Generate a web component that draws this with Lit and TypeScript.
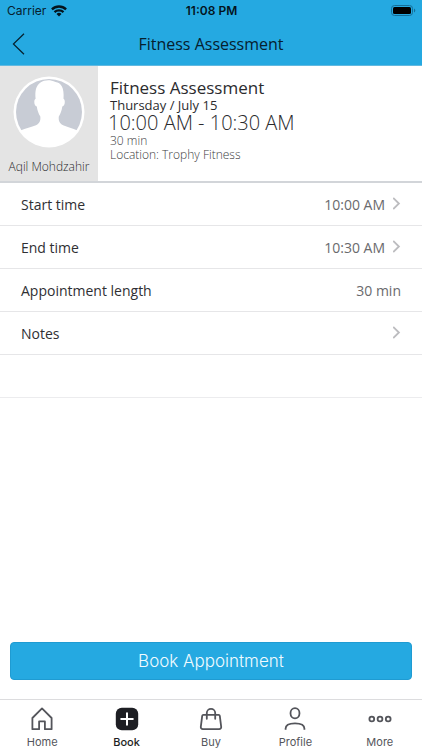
import { LitElement, html, css, svg, nothing } from "lit";
import { customElement, property } from "lit/decorators.js";
import { classMap } from "lit/directives/class-map.js";

const chevron = html`<svg class="chevron" width="8" height="16" viewBox="0 0 8 16" aria-hidden="true">
  <path d="M.2 1 5.9 6.500.2 12" fill="none" stroke="#bcbcbf" stroke-width="1.8" />
</svg>`;

interface Row {
  label: string;
  value?: string;
  link?: boolean;
}

const rows: Row[] = [
  { label: "Start time", value: "10:00 AM", link: true },
  { label: "End time", value: "10:30 AM", link: true },
  { label: "Appointment length", value: "30 min" },
  { label: "Notes", link: true },
];

const tabs = [
  {
    label: "Home",
    icon: svg`<path d="M2.4 11 12 1.4l9.600 9.600v11.200h-6.700v-7.800H9.100v7.800H2.400z" stroke-linejoin="round" />`,
  },
  {
    label: "Book",
    active: true,
    icon: svg`<rect x="0.8" y="0.8" width="22.4" height="22.4" rx="6" fill="#1d1e23" stroke="none" />
      <path d="M12 6.200v11.600M6.200 12h11.600" stroke="#fff" stroke-width="2" stroke-linecap="round" />`,
  },
  {
    label: "Buy",
    icon: svg`<path d="M4.400 7.800h15.200a1.200 1.200 0 0 1 1.200 1l1.400 11a2 2 0 0 1-2 2.300H3.800a2 2 0 0 1-2-2.300l1.400-11a1.200 1.200 0 0 1 1.200-1z" />
      <path d="M7.800 11.800V6a4.200 4.200 0 0 1 8.400 0v5.800" stroke-linecap="round" />`,
  },
  {
    label: "Profile",
    icon: svg`<ellipse cx="12" cy="6.300" rx="4.500" ry="5.100" />
      <path d="M2.600 22.800v-1.200c0-3.400 3-5.200 9.400-5.200s9.400 1.800 9.400 5.200v1.200" />`,
  },
  {
    label: "More",
    icon: svg`<circle cx="3.800" cy="12" r="2.400" /><circle cx="12" cy="12" r="2.400" /><circle cx="20.200" cy="12" r="2.400" />`,
  },
];

@customElement("status-bar")
class StatusBar extends LitElement {
  static styles = css`
    :host {
      display: grid;
      grid-template-columns: 1fr auto 1fr;
      align-items: center;
      height: 22px;
      padding: 0 6px 0 7px;
      font: 12px/16px Inter, "Liberation Sans", sans-serif;
      color: #06202e;
    }
    .carrier {
      display: flex;
      align-items: center;
      gap: 5px;
    }
    .time {
      font-weight: 600;
      color: #04141d;
    }
    .battery {
      justify-self: end;
    }
  `;
  render() {
    return html`
      <span class="carrier">
        Carrier
        <svg width="16" height="12" viewBox="0 0 16 12" aria-label="Wi-Fi">
          <g fill="none" stroke="#04141d" stroke-width="2.3">
            <path d="M.9 4.400a10.200 10.200 0 0 1 14.200 0" />
            <path d="M3.500 7.200a6.500 6.500 0 0 1 9 0" />
          </g>
          <path d="M8 11.600 5.500 9a3.600 3.600 0 0 1 5 0z" fill="#04141d" />
        </svg>
      </span>
      <span class="time">11:08 PM</span>
      <svg class="battery" width="25" height="12" viewBox="0 0 25 12" aria-label="Battery full">
        <rect x=".5" y=".5" width="21" height="10" rx="3" fill="none" stroke="#156f99" />
        <rect x="2" y="2" width="18" height="7" rx="1.500" fill="#000" />
        <path d="M23 3.500v4a2.200 2.200 0 0 0 0-4z" fill="#156f99" />
      </svg>
    `;
  }
}

@customElement("detail-row")
class DetailRow extends LitElement {
  @property() label = "";
  @property() value = "";
  @property({ type: Boolean }) link = false;
  static styles = css`
    :host {
      display: block;
      border-bottom: 1px solid #e6e6e8;
    }
    .row {
      display: flex;
      align-items: center;
      gap: 8px;
      box-sizing: border-box;
      width: 100%;
      height: 42px;
      padding: 2px 21px 0;
      border: 0;
      background: none;
      font: 14px/20px "Open Sans", "Noto Sans", sans-serif;
      color: #2f2f33;
      text-align: left;
    }
    .label {
      flex: 1;
    }
    .value {
      color: #6a6a6d;
    }
  `;
  render() {
    const body = html`<span class="label">${this.label}</span>
      ${this.value ? html`<span class="value">${this.value}</span>` : nothing}
      ${this.link ? chevron : nothing}`;
    return this.link
      ? html`<button class="row" type="button">${body}</button>`
      : html`<div class="row">${body}</div>`;
  }
}

@customElement("tab-bar")
class TabBar extends LitElement {
  static styles = css`
    .tabs {
      display: grid;
      grid-template-columns: repeat(5, 1fr);
      border-top: 1px solid #dcdcde;
      background: #fff;
    }
    .tab {
      display: flex;
      flex-direction: column;
      align-items: center;
      gap: 3px;
      padding: 7px 0 0;
      font: 11px/16px Inter, "Liberation Sans", sans-serif;
      color: #54555b;
      text-decoration: none;
    }
    .active {
      font-weight: 500;
      color: #1d1e23;
    }
  `;
  render() {
    return html`<nav class="tabs">
      ${tabs.map(
        (t) => html`<a href="#${t.label.toLowerCase()}" class=${classMap({ tab: true, active: !!t.active })}>
          <svg width="24" height="24" viewBox="0 0 24 24" fill="none" stroke="#54555b" stroke-width="1.8" aria-hidden="true">
            ${t.icon}
          </svg>
          ${t.label}
        </a>`
      )}
    </nav>`;
  }
}

@customElement("app-root")
class AppRoot extends LitElement {
  static styles = css`
    :host {
      display: flex;
      flex-direction: column;
      min-height: 100vh;
      background: #fff;
      font-family: "Open Sans", "Noto Sans", sans-serif;
    }
    .top {
      background: #25a9e1;
      border-bottom: 1px solid #62b9e0;
    }
    .nav {
      display: grid;
      grid-template-columns: 40px 1fr 40px;
      align-items: center;
      height: 43px;
    }
    .back {
      display: flex;
      padding: 0 0 0 12px;
      border: 0;
      background: none;
    }
    .title {
      margin: 0;
      font-size: 16px;
      line-height: 22px;
      font-weight: 400;
      text-align: center;
      color: #06202e;
    }
    .summary {
      display: flex;
      border-bottom: 2px solid #d2d5d9;
    }
    .person {
      display: flex;
      flex-direction: column;
      align-items: center;
      gap: 10px;
      width: 98px;
      padding: 10px 0 5px;
      background: #e4e4e4;
      font-size: 12px;
      line-height: 18px;
      font-weight: 300;
      color: #2b2b2e;
      white-space: nowrap;
    }
    .info {
      padding: 12px 0 0 12px;
      color: #2b2b2e;
    }
    .name {
      margin: 0;
      font-size: 17px;
      line-height: 20px;
      font-weight: 400;
    }
    .date,
    .time,
    .small {
      margin: 0;
    }
    .date {
      font-size: 13px;
      line-height: 14px;
    }
    .time {
      margin-left: -2px;
      font-size: 20px;
      line-height: 22px;
      font-weight: 300;
    }
    .small {
      font-size: 12px;
      line-height: 14px;
      font-weight: 300;
      color: #3c3c40;
    }
    .blank {
      height: 42px;
      border-bottom: 1px solid #ececee;
    }
    .action {
      margin-top: auto;
      padding: 16px 10px 19px;
    }
    .book {
      display: block;
      width: 100%;
      height: 38px;
      border: 1px solid #1f9bd2;
      border-radius: 4px;
      background: #25a9e1;
      font: 300 17px/22px Inter, "Liberation Sans", sans-serif;
      color: #f0fbff;
    }
  `;
  render() {
    return html`
      <header class="top">
        <status-bar></status-bar>
        <div class="nav">
          <button class="back" type="button" aria-label="Back">
            <svg width="13" height="22" viewBox="0 0 13 22" aria-hidden="true">
              <path d="M12 .7 1.400 11 12 21.300" fill="none" stroke="#06202e" stroke-width="1.2" />
            </svg>
          </button>
          <h1 class="title">Fitness Assessment</h1>
        </div>
      </header>
      <main>
        <section class="summary">
          <div class="person">
            <svg width="72" height="72" viewBox="0 0 72 72" aria-hidden="true">
              <circle cx="36" cy="36" r="35.500" fill="#fff" />
              <circle cx="36" cy="36" r="33" fill="#c8ccd5" />
              <path
                d="M36 70C24 70 13 64 7.500 54.500c5-2.500 11-3.200 15.500-5.300 4-2 4.700-5 4.300-8.700-1.600-2.500-3-6-3.500-10-1.500-.4-2.500-2.200-2.500-4.600 0-1.700.4-2.600 1.300-3.200C21.800 15 23 9.500 27.500 6.500 31.500 4 37 3.500 42.500 6c5.500.5 9 6 8 16.700.9.600 1.300 1.500 1.300 3.200 0 2.400-1 4.200-2.500 4.600-.5 4-1.900 7.500-3.500 10-.4 3.700.3 6.700 4.300 8.700 4.300 2.100 9.400 2.800 14.400 5.300C59 64 48 70 36 70z"
                fill="#fff"
              />
            </svg>
            <span>Aqil Mohdzahir</span>
          </div>
          <div class="info">
            <h2 class="name">Fitness Assessment</h2>
            <p class="date">Thursday / July 15</p>
            <p class="time">10:00 AM - 10:30 AM</p>
            <p class="small">30 min</p>
            <p class="small">Location: Trophy Fitness</p>
          </div>
        </section>
        ${rows.map(
          (r) => html`<detail-row .label=${r.label} .value=${r.value ?? ""} .link=${!!r.link}></detail-row>`
        )}
        <div class="blank"></div>
      </main>
      <div class="action">
        <button class="book" type="button">Book Appointment</button>
      </div>
      <tab-bar></tab-bar>
    `;
  }
}
